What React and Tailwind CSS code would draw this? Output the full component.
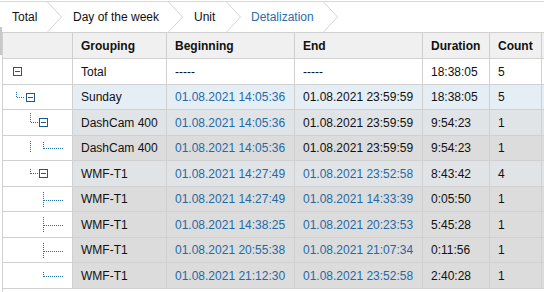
import React from "react";

const DOT = "#1f6fa8";

function VLine({ x, y1, y2 }) {
  return <line x1={x} y1={y1} x2={x} y2={y2} stroke={DOT} strokeWidth="1" strokeDasharray="1 1" />;
}
function HLine({ y, x1, x2 }) {
  return <line x1={x1} y1={y} x2={x2} y2={y} stroke={DOT} strokeWidth="1" strokeDasharray="1 1" />;
}
function Box({ x }) {
  return (
    <g>
      <rect x={x + 0.5} y={8.5} width="8" height="8" fill="white" stroke="#1c5a8a" strokeWidth="1" />
      <line x1={x + 2} y1={12.5} x2={x + 7} y2={12.5} stroke="#1c5a8a" strokeWidth="1" />
    </g>
  );
}

function Tree({ kind }) {
  let content = null;
  if (kind === "total") content = <Box x={10} />;
  if (kind === "sunday")
    content = (
      <>
        <VLine x={13.5} y1={7} y2={13} />
        <HLine y={12.5} x1={14} x2={22} />
        <Box x={23} />
      </>
    );
  if (kind === "g1")
    content = (
      <>
        <VLine x={27.5} y1={3} y2={13} />
        <HLine y={12.5} x1={28} x2={35} />
        <Box x={36} />
      </>
    );
  if (kind === "l1")
    content = (
      <>
        <VLine x={27.5} y1={5} y2={16} />
        <VLine x={40.5} y1={6} y2={13} />
        <HLine y={12.5} x1={41} x2={60} />
      </>
    );
  if (kind === "g2")
    content = (
      <>
        <VLine x={27.5} y1={8} y2={13} />
        <HLine y={12.5} x1={28} x2={35} />
        <Box x={36} />
      </>
    );
  if (kind === "l2")
    content = (
      <>
        <VLine x={40.5} y1={5} y2={20} />
        <HLine y={13.5} x1={41} x2={60} />
      </>
    );
  if (kind === "l2last")
    content = (
      <>
        <VLine x={40.5} y1={9} y2={14} />
        <HLine y={13.5} x1={41} x2={60} />
      </>
    );
  return (
    <svg width="69" height="25" className="block">
      {content}
    </svg>
  );
}

const rows = [
  { tree: "total", g: "Total", b: "-----", e: "-----", d: "18:38:05", c: "5", bg: "bg-white", bBlue: false, eBlue: false },
  { tree: "sunday", g: "Sunday", b: "01.08.2021 14:05:36", e: "01.08.2021 23:59:59", d: "18:38:05", c: "5", bg: "bg-[#e5eef5]", bBlue: true, eBlue: false },
  { tree: "g1", g: "DashCam 400", b: "01.08.2021 14:05:36", e: "01.08.2021 23:59:59", d: "9:54:23", c: "1", bg: "bg-[#e1e4e7]", bBlue: true, eBlue: false },
  { tree: "l1", g: "DashCam 400", b: "01.08.2021 14:05:36", e: "01.08.2021 23:59:59", d: "9:54:23", c: "1", bg: "bg-[#dcdcdc]", bBlue: true, eBlue: false },
  { tree: "g2", g: "WMF-T1", b: "01.08.2021 14:27:49", e: "01.08.2021 23:52:58", d: "8:43:42", c: "4", bg: "bg-[#e1e4e7]", bBlue: true, eBlue: true },
  { tree: "l2", g: "WMF-T1", b: "01.08.2021 14:27:49", e: "01.08.2021 14:33:39", d: "0:05:50", c: "1", bg: "bg-[#dcdcdc]", bBlue: true, eBlue: true },
  { tree: "l2", g: "WMF-T1", b: "01.08.2021 14:38:25", e: "01.08.2021 20:23:53", d: "5:45:28", c: "1", bg: "bg-[#dcdcdc]", bBlue: true, eBlue: true },
  { tree: "l2", g: "WMF-T1", b: "01.08.2021 20:55:38", e: "01.08.2021 21:07:34", d: "0:11:56", c: "1", bg: "bg-[#dcdcdc]", bBlue: true, eBlue: true },
  { tree: "l2last", g: "WMF-T1", b: "01.08.2021 21:12:30", e: "01.08.2021 23:52:58", d: "2:40:28", c: "1", bg: "bg-[#dcdcdc]", bBlue: true, eBlue: true },
];

const heights = ["h-[26px]", "h-[25px]", "h-[26px]", "h-[25px]", "h-[26px]", "h-[25px]", "h-[26px]", "h-[25px]", "h-[26px]"];

function Chevron() {
  return (
    <svg width="15" height="30" className="block shrink-0">
      <polyline points="0.5,0 14.5,15 0.5,30" fill="none" stroke="#d4d4d4" strokeWidth="1" />
    </svg>
  );
}

export default function App() {
  const cell = "border-r border-[#d0d0d0] flex items-center pl-[8px] whitespace-nowrap";
  return (
    <div
      className="relative w-[544px] h-[292px] bg-white overflow-hidden text-[12px] text-[#111] flex flex-col"
      style={{ fontFamily: '"Liberation Sans", Arial, sans-serif' }}
    >
      {/* breadcrumb */}
      <div className="mt-[1px] h-[31px] shrink-0 border-t border-[#d8d8d8] flex items-stretch">
        <div className="w-[47px] pl-[12px] flex items-center">Total</div>
        <Chevron />
        <div className="w-[106px] pl-[11px] flex items-center">Day of the week</div>
        <Chevron />
        <div className="w-[43px] pl-[11px] flex items-center">Unit</div>
        <Chevron />
        <div className="w-[82px] pl-[10px] flex items-center text-[#2a6ea6]">Detalization</div>
        <Chevron />
      </div>

      {/* table */}
      <div className="ml-[2px] flex-1 border-l border-[#d0d0d0]">
        <div className="h-[27px] border-t border-b border-[#d0d0d0] bg-[#f0f0f0] flex font-bold">
          <div className="w-[70px] border-r border-[#d0d0d0]" />
          <div className={`w-[94px] ${cell}`}>Grouping</div>
          <div className={`w-[128px] ${cell}`}>Beginning</div>
          <div className={`w-[128px] ${cell}`}>End</div>
          <div className={`w-[67px] ${cell}`}>Duration</div>
          <div className={`w-[52px] ${cell}`}>Count</div>
          <div className="flex-1" />
        </div>
        {rows.map((r, i) => (
          <div key={i} className={`${heights[i]} border-b border-[#d0d0d0] flex`}>
            <div className="w-[70px] border-r border-[#d0d0d0] bg-white flex items-start">
              <Tree kind={r.tree} />
            </div>
            <div className={`flex flex-1 ${r.bg}`}>
              <div className={`w-[94px] ${cell}`}>{r.g}</div>
              <div className={`w-[128px] ${cell} ${r.bBlue ? "text-[#1f6aa5]" : ""}`}>{r.b}</div>
              <div className={`w-[128px] ${cell} ${r.eBlue ? "text-[#1f6aa5]" : ""}`}>{r.e}</div>
              <div className={`w-[67px] ${cell}`}>{r.d}</div>
              <div className={`w-[52px] ${cell}`}>{r.c}</div>
              <div className="flex-1" />
            </div>
          </div>
        ))}
      </div>

      {/* left edge marker */}
      <div className="absolute left-0 top-[27px] w-[2px] h-[28px] bg-[#c8c8c8]" />
    </div>
  );
}
